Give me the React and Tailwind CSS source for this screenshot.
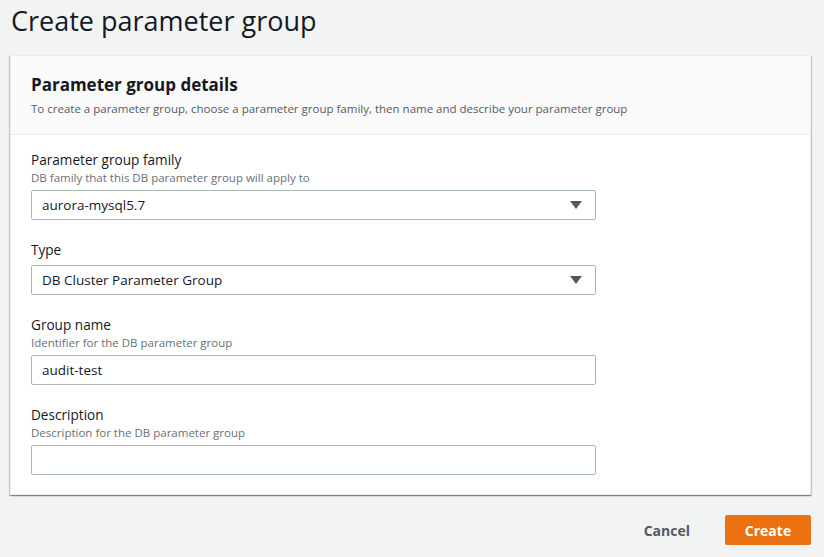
import React from 'react';

const Caret = () => (
    <svg width="12" height="8" viewBox="0 0 12 8" className="text-[#545b64]">
        <path d="M0 0 L12 0 L6 8 Z" fill="currentColor" />
    </svg>
);

const Field = ({ label, hint, children, className = '' }) => (
    <div className={className}>
        <div className="text-[13.6px] leading-[20px] text-[#16191f]">{label}</div>
        {hint && <div className="text-[11.5px] leading-[16px] text-[#687078]">{hint}</div>}
        <div className={hint ? 'mt-[4px]' : 'mt-[5px]'}>{children}</div>
    </div>
);

const SelectBox = ({ value }) => (
    <div className="flex items-center justify-between w-[565px] h-[30px] border border-[#aab7b8] rounded-[2px] bg-white pl-[10px] pr-[13px] text-[13.5px] text-[#16191f]">
        <span>{value}</span>
        <Caret />
    </div>
);

const TextBox = ({ value }) => (
    <div className="flex items-center w-[565px] h-[30px] border border-[#aab7b8] rounded-[2px] bg-white px-[10px] text-[13.5px] text-[#16191f]">
        {value}
    </div>
);

export default function App() {
    return (
        <div className="w-[824px] h-[557px] bg-[#f2f3f3] overflow-hidden" style={{ fontFamily: '"Open Sans", "Noto Sans", sans-serif' }}>
            <h1 className="pl-[11px] pt-[1px] text-[27px] leading-[40px] text-[#16191f] font-normal">Create parameter group</h1>

            <div className="ml-[10px] mt-[14px] w-[801px] bg-white border border-[#eaeded] shadow-[0_1px_1px_0_rgba(0,28,36,0.3),1px_1px_1px_0_rgba(0,28,36,0.15),-1px_1px_1px_0_rgba(0,28,36,0.15)]">
                <div className="bg-[#fafafa] border-b border-[#eaeded] px-[20px] pt-[17px] h-[79px]">
                    <h2 className="text-[17px] leading-[24px] font-bold text-[#16191f]">Parameter group details</h2>
                    <p className="text-[11.5px] leading-[16px] text-[#545b64] mt-[4px]">To create a parameter group, choose a parameter group family, then name and describe your parameter group</p>
                </div>

                <div className="px-[20px] pt-[15px] pb-[19px]">
                    <Field label="Parameter group family" hint="DB family that this DB parameter group will apply to">
                        <SelectBox value="aurora-mysql5.7" />
                    </Field>
                    <Field label="Type" className="mt-[20px]">
                        <SelectBox value="DB Cluster Parameter Group" />
                    </Field>
                    <Field label="Group name" hint="Identifier for the DB parameter group" className="mt-[20px]">
                        <TextBox value="audit-test" />
                    </Field>
                    <Field label="Description" hint="Description for the DB parameter group" className="mt-[20px]">
                        <TextBox value="" />
                    </Field>
                </div>
            </div>

            <div className="flex justify-end items-center gap-[20px] mt-[20px] pr-[13px]">
                <button className="px-[15px] h-[30px] text-[14px] font-bold text-[#545b64]">Cancel</button>
                <button className="w-[86px] h-[30px] rounded-[2px] bg-[#ec7211] text-white text-[14px] font-bold">Create</button>
            </div>
        </div>
    );
}
